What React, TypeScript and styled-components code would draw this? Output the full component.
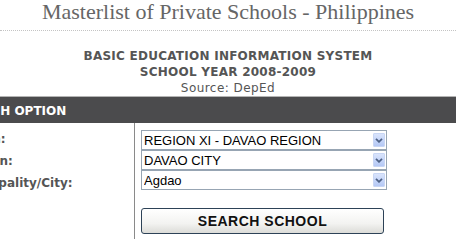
import styled, { createGlobalStyle } from 'styled-components';

const GlobalStyle = createGlobalStyle`
    html, body {
        margin: 0;
        padding: 0;
        background: #ffffff;
        overflow: hidden;
    }
`;

const StyledPage = styled.div`
    width: 456px;
    height: 239px;
    overflow: hidden;
    font-family: 'DejaVu Sans', Verdana, sans-serif;
`;

const StyledTitle = styled.h1`
    margin: 0;
    padding-bottom: 6px;
    border-bottom: 1px dotted #c4c4c4;
    font-family: 'Liberation Serif', Georgia, serif;
    font-size: 22px;
    font-weight: 400;
    line-height: 24px;
    color: #666666;
    text-align: center;
`;

const StyledInfo = styled.div`
    margin-top: 17px;
    text-align: center;
    color: #555555;
    font-size: 12px;
    line-height: 16px;
`;

const StyledInfoLine = styled.div<{ $bold?: boolean }>`
    font-weight: ${({ $bold }) => ($bold ? 700 : 400)};
    letter-spacing: ${({ $bold }) => ($bold ? '0.25px' : '0.45px')};
`;

const StyledPanel = styled.section`
    margin-left: -52px;
`;

const StyledBar = styled.div`
    padding: 6px 8px 4px;
    border-top: 1px solid #b4b4b4;
    background: #4b4b4d;
    color: #ffffff;
    font-size: 12px;
    font-weight: 700;
    line-height: 16px;
`;

const StyledForm = styled.div`
    display: flex;
`;

const StyledLabels = styled.div`
    width: 180px;
    padding: 6px 0 0 6px;
    display: flex;
    flex-direction: column;
`;

const StyledLabel = styled.label`
    height: 20px;
    display: flex;
    align-items: center;
    font-size: 12px;
    font-weight: 700;
    color: #555555;

    & + & {
        padding-top: 2px;
    }
`;

const StyledFields = styled.div`
    padding: 7px 0 12px 6px;
    border-left: 1px solid #8a8a8a;
    display: flex;
    flex-direction: column;
`;

const StyledSelectBox = styled.div`
    width: 246px;
    height: 20px;
    box-sizing: border-box;
    border: 1px solid #97a5b3;
    display: flex;
    align-items: center;
    padding: 0 1px 0 0;
    background: #ffffff;
`;

const StyledSelect = styled.select`
    flex: 1;
    height: 100%;
    border: none;
    outline: none;
    padding: 0 0 0 2px;
    margin: 0;
    appearance: none;
    background: transparent;
    font-family: 'Liberation Sans', Arial, sans-serif;
    font-size: 13px;
    color: #000000;
`;

const StyledArrow = styled.span`
    width: 12px;
    height: 14px;
    box-sizing: border-box;
    border: 1px solid #c8d6f4;
    border-radius: 1px;
    background: linear-gradient(#d9e4fc, #b4c8f5);
    display: flex;
    align-items: center;
    justify-content: center;
`;

const StyledButton = styled.button`
    margin-top: 18px;
    width: 243px;
    height: 26px;
    border: 1px solid #2d4257;
    border-radius: 3px;
    background: linear-gradient(#ffffff, #f3f3f1 60%, #dcdcd8);
    font-family: 'Liberation Sans', Arial, sans-serif;
    font-size: 14px;
    font-weight: 700;
    letter-spacing: 0.5px;
    color: #111111;
    padding: 0;
`;

const options = [
    { label: 'Region:', value: 'REGION XI - DAVAO REGION' },
    { label: 'Division:', value: 'DAVAO CITY' },
    { label: 'Municipality/City:', value: 'Agdao' },
];

function Arrow() {
    return (
        <StyledArrow>
            <svg width='8' height='5' viewBox='0 0 8 5'>
                <path d='M1 0.9 L4 3.8 L7 0.9' fill='none' stroke='#4d6185' strokeWidth='1.8' />
            </svg>
        </StyledArrow>
    );
}

function App() {
    return (
        <>
            <GlobalStyle />
            <StyledPage>
                <StyledTitle>Masterlist of Private Schools - Philippines</StyledTitle>
                <StyledInfo>
                    <StyledInfoLine $bold>BASIC EDUCATION INFORMATION SYSTEM</StyledInfoLine>
                    <StyledInfoLine $bold>SCHOOL YEAR 2008-2009</StyledInfoLine>
                    <StyledInfoLine>Source: DepEd</StyledInfoLine>
                </StyledInfo>
                <StyledPanel>
                    <StyledBar>SEARCH OPTION</StyledBar>
                    <StyledForm>
                        <StyledLabels>
                            {options.map((o) => (
                                <StyledLabel key={o.label}>{o.label}</StyledLabel>
                            ))}
                        </StyledLabels>
                        <StyledFields>
                            {options.map((o) => (
                                <StyledSelectBox key={o.label}>
                                    <StyledSelect defaultValue={o.value}>
                                        <option>{o.value}</option>
                                    </StyledSelect>
                                    <Arrow />
                                </StyledSelectBox>
                            ))}
                            <StyledButton>SEARCH SCHOOL</StyledButton>
                        </StyledFields>
                    </StyledForm>
                </StyledPanel>
            </StyledPage>
        </>
    );
}

export default App;
